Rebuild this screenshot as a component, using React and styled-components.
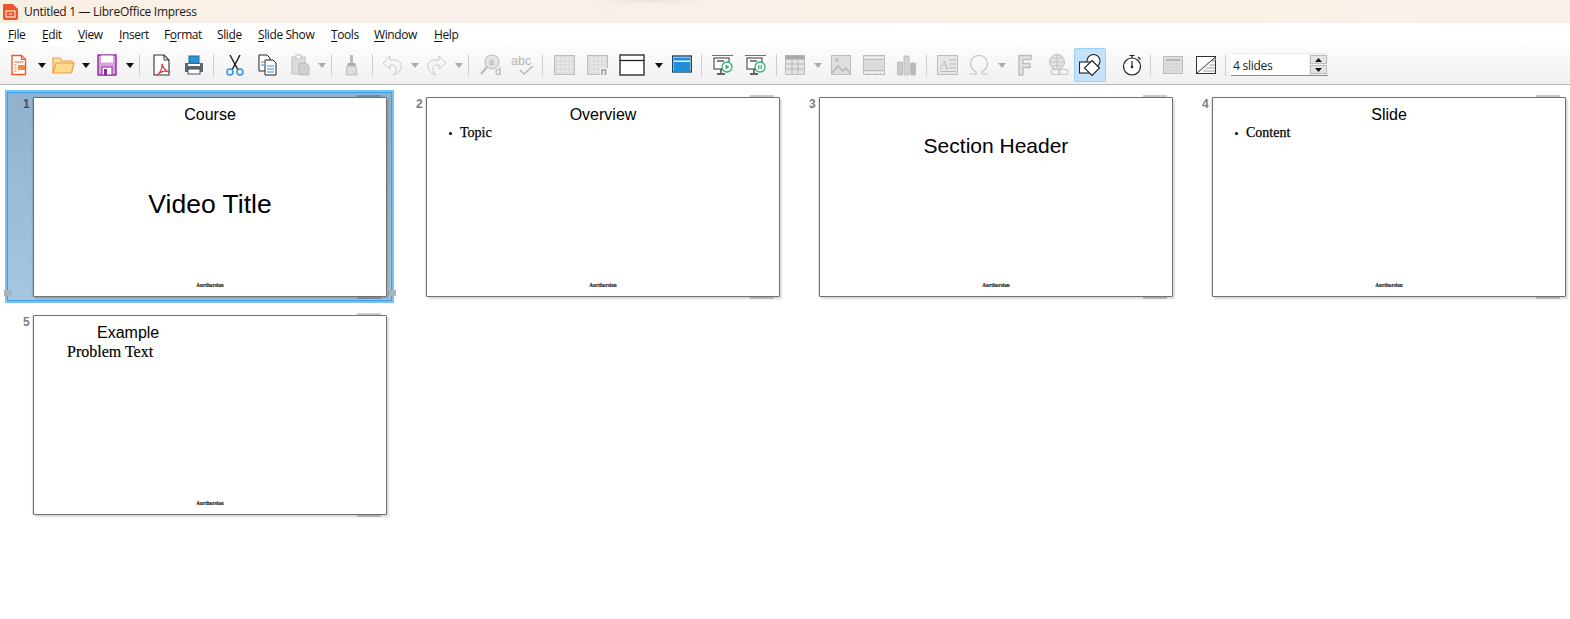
import React from "react";
import styled, { createGlobalStyle } from "styled-components";

const GRAY = "#bdbdbd";
const GRAY_FILL = "#dcdcdc";
const BLUE = "#1c8ad0";
const GREEN = "#2fb36b";

const Global = createGlobalStyle`
  html, body {
    margin: 0;
    padding: 0;
    background: #fff;
    font-family: "Open Sans", "Noto Sans", sans-serif;
  }
`;

const Window = styled.div`
  width: 1570px;
  height: 619px;
  overflow: hidden;
  background: #fff;
`;

const TitleBar = styled.div`
  height: 23px;
  display: flex;
  align-items: center;
  padding-left: 3px;
  gap: 6px;
  background:
    radial-gradient(ellipse 60px 5px at 650px 0, #ebe3da, transparent),
    linear-gradient(90deg, #f8efe3 0%, #f9f0ea 25%, #f9efeb 35%, #f8f1e6 60%, #f8f2e6 80%, #f9f0ec 92%);
`;

const TitleText = styled.span`
  font-size: 12px;
  letter-spacing: -0.3px;
  color: #1a1a1a;
`;

const MenuBar = styled.div`
  height: 23px;
  display: flex;
  align-items: center;
  background: #fff;
`;

const MenuItem = styled.span`
  font-size: 12px;
  letter-spacing: -0.4px;
  color: #111;
  margin-left: ${(p) => p.$ml}px;
  width: ${(p) => p.$w}px;
  white-space: nowrap;
  u {
    text-underline-offset: 2px;
  }
`;

const Toolbar = styled.div`
  height: 38px;
  display: flex;
  align-items: center;
  background: linear-gradient(180deg, #fcfcfc 0%, #f0f0f0 100%);
  border-bottom: 1px solid #b9b9b9;
`;

const Tool = styled.div`
  flex: none;
  width: ${(p) => p.$w}px;
  margin-left: ${(p) => p.$ml}px;
  display: flex;
  align-items: center;
  justify-content: center;
`;

const ActiveTool = styled(Tool)`
  height: 34px;
  box-sizing: border-box;
  background: #c4e3fb;
  border: 1px solid #9fd0f5;
  border-radius: 2px;
`;

const Separator = styled.div`
  flex: none;
  width: 1px;
  height: 22px;
  margin-left: ${(p) => p.$ml}px;
  background: #cfcfcf;
`;

const Spin = styled.div`
  flex: none;
  width: 97px;
  height: 21px;
  margin-left: 5px;
  display: flex;
  background: #fff;
  border-bottom: 1px solid #8c8c8c;
  box-shadow: 0 -1px 0 #ececec;
`;

const SpinValue = styled.span`
  flex: 1;
  font-size: 12px;
  letter-spacing: -0.25px;
  line-height: 23px;
  padding-left: 2px;
  color: #222;
`;

const SpinButtons = styled.div`
  width: 17px;
  display: flex;
  flex-direction: column;
  gap: 1px;
  background: #f0f0f0;
  padding: 1px;
`;

const SpinButton = styled.div`
  flex: 1;
  display: flex;
  align-items: center;
  justify-content: center;
  background: #e3e3e3;
  border: 1px solid #bcbcbc;
`;

const Sorter = styled.div`
  display: grid;
  grid-template-columns: repeat(4, 393px);
  grid-auto-rows: 218px;
  padding: 7px 0 0 7px;
`;

const Cell = styled.div`
  position: relative;
  width: 385px;
  height: 209px;
  box-sizing: border-box;
  padding: 4px 0 0 25px;
  border: ${(p) => (p.$selected ? "1px solid #3f9fe6" : "1px solid transparent")};
  outline: ${(p) => (p.$selected ? "2px solid #7cc0f2" : "none")};
  background: ${(p) =>
    p.$selected ? "linear-gradient(180deg, #8fb2cf 0%, #a6c6e0 100%)" : "transparent"};
`;

const Handle = styled.span`
  position: absolute;
  top: 197px;
  ${(p) => (p.$right ? "right: -5px;" : "left: -4px;")}
  width: 8px;
  height: 6px;
  background: #a9b4bd;
`;

const SlideNumber = styled.span`
  position: absolute;
  left: 15px;
  top: 4px;
  font-family: "Liberation Sans", Arial, sans-serif;
  font-size: 12px;
  font-weight: 700;
  color: ${(p) => (p.$selected ? "#444b55" : "#7d7d7d")};
`;

const Slide = styled.div`
  position: relative;
  width: 354px;
  height: 200px;
  box-sizing: border-box;
  background: #fff;
  border: 1px solid #707070;
  border-radius: 1px;
  box-shadow: 2px 2px 2px rgba(0, 0, 0, 0.14), -1px 0 1px rgba(0, 0, 0, 0.12);
  display: flex;
  flex-direction: column;
  align-items: ${(p) => (p.$left ? "flex-start" : "center")};
  color: #000;
  &::before,
  &::after {
    content: "";
    position: absolute;
    right: 5px;
    width: 24px;
    height: 2px;
    background: rgba(0, 0, 0, 0.2);
  }
  &::before {
    top: -3px;
  }
  &::after {
    bottom: -3px;
  }
`;

const SlideTitle = styled.div`
  font-family: "Liberation Sans", Arial, sans-serif;
  font-size: ${(p) => p.$size || 16}px;
  line-height: 18px;
  margin-top: ${(p) => p.$top || 8}px;
  margin-left: ${(p) => p.$left || 0}px;
  white-space: nowrap;
`;

const Bullet = styled.div`
  align-self: flex-start;
  font-family: "Liberation Serif", "Times New Roman", serif;
  font-size: 14px;
  line-height: 16px;
  margin: 1px 0 0 22px;
  display: flex;
  gap: 8px;
  align-items: center;
  -webkit-text-stroke: 0.25px #000;
  &::before {
    content: "";
    width: 3px;
    height: 3px;
    border-radius: 50%;
    background: #000;
  }
`;

const ProblemText = styled.div`
  font-family: "Liberation Serif", "Times New Roman", serif;
  font-size: 16px;
  line-height: 18px;
  margin: 1px 0 0 33px;
  -webkit-text-stroke: 0.2px #000;
`;

const Footer = styled.div`
  margin-top: auto;
  margin-bottom: 7px;
  align-self: center;
  font-family: "Liberation Serif", "Times New Roman", serif;
  font-size: 5.2px;
  font-weight: 700;
  line-height: 7px;
  color: #222;
  -webkit-text-stroke: 0.15px #222;
`;

const Svg = ({ w, h = 22, children }) => (
  <svg width={w} height={h} viewBox={`0 0 ${w} ${h}`} fill="none">
    {children}
  </svg>
);

const Arrow = ({ color = "#111" }) => (
  <svg width="8" height="5" viewBox="0 0 8 5">
    <path d="M0 0h8L4 5z" fill={color} />
  </svg>
);

const NewDoc = () => (
  <Svg w={20}>
    <path d="M3 1.500h9.500l4 4v15H3z" fill="#fff" stroke="#f05a28" strokeWidth="1.4" />
    <path d="M12.500 1.500v4h4" stroke="#f05a28" strokeWidth="1.2" />
    <path d="M5.500 8h9M5.500 11h2M5.500 14h2M5.500 17h2" stroke="#f05a28" strokeWidth="1.2" />
    <rect x="9" y="11" width="7" height="5" fill="#f58b3c" />
  </Svg>
);

const OpenFolder = () => (
  <Svg w={23}>
    <path d="M1 19V4h7l2 3h10v3" fill="#fbe3a6" stroke="#ef9a3c" strokeWidth="1.2" />
    <path d="M1 19l3-10h18l-2.500 10z" fill="#fcdc8c" stroke="#ef9a3c" strokeWidth="1.2" />
  </Svg>
);

const Save = () => (
  <Svg w={20}>
    <rect x="1" y="1" width="18" height="20" fill="#d8a2dd" stroke="#8e2a9e" strokeWidth="1.4" />
    <rect x="4" y="1.500" width="12" height="7" fill="#fff" />
    <rect x="5" y="13" width="10" height="8" fill="#fff" stroke="#8e2a9e" />
    <rect x="7" y="15" width="3" height="6" fill="#8e2a9e" />
  </Svg>
);

const Pdf = () => (
  <Svg w={19}>
    <path d="M2 1h10l5 5v15H2z" fill="#fff" stroke="#333" strokeWidth="1.1" />
    <path d="M12 1v5h5" stroke="#333" />
    <path d="M10 10c1 5-3 10-5 11 3-3 8-5 13-3-4 0-7-4-8-8z" stroke="#e23b3b" strokeWidth="1.3" />
  </Svg>
);

const Print = () => (
  <Svg w={20}>
    <rect x="5" y="2" width="10" height="7" fill="#2a93d5" stroke="#1c6fa5" />
    <path d="M1 9h18v9H1z" fill="#5a6570" />
    <rect x="4" y="15" width="12" height="5" fill="#fff" stroke="#46505a" />
    <rect x="4" y="10" width="12" height="2" fill="#fff" />
  </Svg>
);

const Cut = () => (
  <Svg w={18}>
    <path d="M4 1l8 15M14 1L6 16" stroke="#222" strokeWidth="1.5" />
    <circle cx="4" cy="18" r="3" stroke="#2a8fd8" strokeWidth="1.4" />
    <circle cx="14" cy="18" r="3" stroke="#2a8fd8" strokeWidth="1.4" />
  </Svg>
);

const Copy = () => (
  <Svg w={19}>
    <path d="M1 1h8l3 3v13H1z" fill="#fff" stroke="#222" />
    <path d="M7 6h8l3 3v12H7z" fill="#fff" stroke="#222" />
    <path d="M3 8h3M3 11h3M9 12h7M9 15h7M9 18h7" stroke="#2a8fd8" />
  </Svg>
);

const Paste = () => (
  <Svg w={19}>
    <rect x="1" y="3" width="13" height="17" fill={GRAY_FILL} stroke={GRAY} />
    <rect x="5" y="1" width="5" height="4" fill="#fff" stroke={GRAY} />
    <path d="M8 9h7l3 3v9H8z" fill="#d0d0d0" stroke="#bbb" />
  </Svg>
);

const Brush = () => (
  <Svg w={13}>
    <rect x="5" y="1" width="3" height="8" fill={GRAY} />
    <path d="M3 9h7l1 3H2z" fill="#aaa" />
    <path d="M2 12h9l1 9H1z" fill={GRAY_FILL} stroke={GRAY} />
  </Svg>
);

const UNDO_PATH =
  "M1 9L8 2v4h4c6 0 8 5 7 8-1 4-5 6-8 7 3-3 4-6 3-8-1-2-3-2-6-2v4z";

const Undo = () => (
  <Svg w={20}>
    <path d={UNDO_PATH} stroke="#c9c9c9" strokeLinejoin="round" />
  </Svg>
);

const Redo = () => (
  <Svg w={20}>
    <path d={UNDO_PATH} stroke="#c9c9c9" strokeLinejoin="round" transform="matrix(-1 0 0 1 20 0)" />
  </Svg>
);

const Find = () => (
  <Svg w={23}>
    <circle cx="12" cy="8" r="7" fill="#e3e3e3" stroke={GRAY} />
    <path d="M7 13l-6 7" stroke={GRAY} strokeWidth="2.400" />
    <text x="9" y="11" fontFamily="Liberation Sans" fontSize="9" fill="#aaa">a</text>
    <text x="15" y="21" fontFamily="Liberation Sans" fontSize="11" fill="#aaa">d</text>
  </Svg>
);

const Spell = () => (
  <Svg w={23}>
    <text x="0" y="11" fontFamily="Liberation Sans" fontSize="12.5" fill="#b5b5b5">abc</text>
    <path d="M9 16l4 4 9-8" stroke="#b5b5b5" strokeWidth="1.3" />
  </Svg>
);

const DotGrid = ({ n }) => {
  const dots = [];
  for (let y = 4; y < 20; y += 4) {
    for (let x = 4; x < 20; x += 4) {
      dots.push(<rect key={`${x}-${y}`} x={x} y={y} width="2" height="2" fill="#ececec" />);
    }
  }
  return (
    <Svg w={21}>
      <rect x="0.500" y="1.500" width="20" height="19" fill="#dedede" stroke={GRAY} />
      {dots}
      {n && <rect x="13" y="14" width="8" height="8" fill="#f0f0f0" />}
      {n && <path d="M15 21v-5h3.500v5" stroke="#999" strokeWidth="1.4" />}
    </Svg>
  );
};

const Master = () => (
  <Svg w={26}>
    <rect x="1" y="1" width="24" height="20" fill="#fff" stroke="#222" strokeWidth="1.3" />
    <path d="M1 6.500h24" stroke="#222" strokeWidth="1.3" />
  </Svg>
);

const BlueLayout = () => (
  <Svg w={20}>
    <rect x="0.700" y="2" width="18.600" height="16" fill="#e8f4fb" stroke="#123a5e" strokeWidth="1.3" />
    <rect x="2" y="3.500" width="16" height="3" fill="#1f8ed6" />
    <rect x="2" y="8" width="16" height="9" fill="#1f8ed6" />
  </Svg>
);

const Show = ({ pause }) => (
  <Svg w={21}>
    <path d="M0 1.500h21" stroke={BLUE} />
    <rect x="2" y="4" width="15" height="11" fill="#fff" stroke="#333" />
    <path d="M5 7h7" stroke="#777" strokeWidth="1.8" />
    <path d="M9 15v4M5 20h8" stroke="#333" strokeWidth="1.3" />
    <circle cx="15" cy="13" r="5" fill="#fff" stroke={GREEN} strokeWidth="1.3" />
    {pause ? (
      <path d="M13.800 11v4M16.200 11v4" stroke={GREEN} strokeWidth="1.3" />
    ) : (
      <path d="M13.500 10.500v5l4-2.500z" fill={GREEN} />
    )}
  </Svg>
);

const Table = () => (
  <Svg w={20}>
    <rect x="0.500" y="1.500" width="19" height="19" fill="#e4e4e4" stroke={GRAY} />
    <rect x="0.500" y="1.500" width="19" height="4" fill="#a8a8a8" />
    <path d="M7 5v15M13 5v15M1 10h18M1 15h18" stroke="#b5b5b5" />
  </Svg>
);

const Picture = () => (
  <Svg w={20}>
    <rect x="0.500" y="1.500" width="19" height="19" fill="#dedede" stroke={GRAY} />
    <circle cx="6" cy="6" r="2" fill="#c4c4c4" />
    <path d="M1 19l6-7 5 5 3-3 4 5" stroke="#b5b5b5" strokeWidth="1.3" />
  </Svg>
);

const Film = () => (
  <Svg w={22}>
    <rect x="0.500" y="1.500" width="21" height="19" fill="#dcdcdc" stroke={GRAY} />
    <path d="M1 3.500h20M1 18.500h20" stroke="#fff" strokeWidth="1.6" strokeDasharray="2 1.500" />
    <path d="M1 5.500h20M1 16.500h20" stroke={GRAY} />
  </Svg>
);

const Chart = () => (
  <Svg w={19}>
    <rect x="0.500" y="8" width="5" height="13" rx="1" fill="#c9c9c9" stroke={GRAY} />
    <rect x="7" y="2" width="5" height="19" rx="1" fill="#d4d4d4" stroke={GRAY} />
    <rect x="13.500" y="9" width="5" height="12" rx="1" fill="#b8b8b8" stroke={GRAY} />
  </Svg>
);

const TextBox = () => (
  <Svg w={21}>
    <rect x="0.500" y="1.500" width="20" height="19" fill="#e6e6e6" stroke={GRAY} />
    <text x="2.500" y="15" fontFamily="Liberation Serif" fontSize="13" fill="#bbb">A</text>
    <path d="M12 6h7M12 10h7M12 14h7M3 17.500h16" stroke="#bbb" />
  </Svg>
);

const Omega = () => (
  <Svg w={20}>
    <path
      d="M1 20h6v-2.500C3.500 16 1.500 13 1.500 9.500 1.500 5 5 1.500 10 1.500s8.500 3.500 8.500 8c0 3.500-2 6.500-5.500 8V20h6"
      stroke="#c2c2c2"
      strokeWidth="1.2"
    />
  </Svg>
);

const FontWork = () => (
  <Svg w={14}>
    <path d="M1 1.500h12v4H5v4h7v4H5v7.500H1z" fill="#e2e2e2" stroke={GRAY} strokeWidth="1.4" />
  </Svg>
);

const HyperLink = () => (
  <Svg w={21}>
    <circle cx="9" cy="8" r="7.500" fill="#e2e2e2" stroke={GRAY} />
    <path d="M2 8h14M9 1v14M4 3.500c3 1.500 7 1.500 10 0M4 12.500c3-1.500 7-1.500 10 0" stroke={GRAY} strokeWidth="0.8" />
    <rect x="3" y="15.500" width="9" height="5" rx="2.500" fill="#f2f2f2" stroke="#c6c6c6" strokeWidth="1.2" />
    <rect x="11" y="15.500" width="9" height="5" rx="2.500" fill="none" stroke="#c6c6c6" strokeWidth="1.2" />
  </Svg>
);

const Shapes = () => (
  <Svg w={22}>
    <circle cx="14.500" cy="7" r="6.500" fill="#fff" stroke="#222" strokeWidth="1.1" />
    <rect x="0.500" y="8" width="14" height="11" fill="#fff" stroke="#222" strokeWidth="1.1" />
    <path d="M13 6.500l7.500 7.500-7.500 7.500L5.500 14z" fill="#fff" stroke="#222" strokeWidth="1.1" />
  </Svg>
);

const Timer = () => (
  <Svg w={20}>
    <circle cx="10" cy="12.500" r="8.500" fill="#fff" stroke="#222" strokeWidth="1.2" />
    <path d="M7.500 1.500h5M10 1.500v2.500M16 3l2.500 2.500" stroke="#222" strokeWidth="1.2" />
    <path d="M10 7v5.500" stroke="#222" strokeWidth="1.2" />
    <circle cx="10" cy="13" r="1.300" fill="#222" />
  </Svg>
);

const HeaderFooter = () => (
  <Svg w={20}>
    <rect x="0.500" y="2.500" width="19" height="17" fill="#dedede" stroke={GRAY} />
    <path d="M3 6h14" stroke="#aaa" strokeWidth="1.6" />
    <path d="M3 10h14M3 13h14M3 16h14" stroke="#cfcfcf" />
  </Svg>
);

const Transition = () => (
  <Svg w={20}>
    <rect x="0.500" y="2.500" width="19" height="17" fill="#fff" stroke="#333" />
    <path d="M0.500 19.500L19.500 3" stroke="#333" />
    <path d="M19 4v3h-3zM10 14h9M13 11h6M7 17h12" stroke="#999" />
  </Svg>
);

const tools = [
  { c: <NewDoc />, w: 20, ml: 9 },
  { c: <Arrow />, w: 8, ml: 9 },
  { c: <OpenFolder />, w: 23, ml: 6 },
  { c: <Arrow />, w: 8, ml: 7 },
  { c: <Save />, w: 20, ml: 7 },
  { c: <Arrow />, w: 8, ml: 9 },
  { sep: 5 },
  { c: <Pdf />, w: 19, ml: 12 },
  { c: <Print />, w: 20, ml: 13 },
  { sep: 9 },
  { c: <Cut />, w: 18, ml: 12 },
  { c: <Copy />, w: 19, ml: 14 },
  { c: <Paste />, w: 19, ml: 14 },
  { c: <Arrow color="#aaa" />, w: 8, ml: 8 },
  { sep: 5 },
  { c: <Brush />, w: 13, ml: 13 },
  { sep: 14 },
  { c: <Undo />, w: 20, ml: 9 },
  { c: <Arrow color="#aaa" />, w: 8, ml: 9 },
  { c: <Redo />, w: 20, ml: 8 },
  { c: <Arrow color="#aaa" />, w: 8, ml: 8 },
  { sep: 5 },
  { c: <Find />, w: 23, ml: 11 },
  { c: <Spell />, w: 23, ml: 8 },
  { sep: 8 },
  { c: <DotGrid />, w: 21, ml: 11 },
  { c: <DotGrid n />, w: 21, ml: 12 },
  { c: <Master />, w: 26, ml: 11 },
  { c: <Arrow />, w: 8, ml: 10 },
  { c: <BlueLayout />, w: 20, ml: 9 },
  { sep: 9 },
  { c: <Show />, w: 21, ml: 10 },
  { c: <Show pause />, w: 21, ml: 12 },
  { sep: 10 },
  { c: <Table />, w: 20, ml: 8 },
  { c: <Arrow color="#aaa" />, w: 8, ml: 9 },
  { c: <Picture />, w: 20, ml: 9 },
  { c: <Film />, w: 22, ml: 12 },
  { c: <Chart />, w: 19, ml: 12 },
  { sep: 10 },
  { c: <TextBox />, w: 21, ml: 10 },
  { c: <Omega />, w: 20, ml: 11 },
  { c: <Arrow color="#aaa" />, w: 8, ml: 9 },
  { c: <FontWork />, w: 14, ml: 12 },
  { c: <HyperLink />, w: 21, ml: 16 },
  { c: <Shapes />, w: 32, ml: 5, active: true },
  { c: <Timer />, w: 20, ml: 16 },
  { sep: 8 },
  { c: <HeaderFooter />, w: 20, ml: 12 },
  { c: <Transition />, w: 20, ml: 13 },
  { sep: 9 },
];

const menus = [
  { ml: 8, w: 26, label: <><u>F</u>ile</> },
  { ml: 8, w: 28, label: <><u>E</u>dit</> },
  { ml: 8, w: 33, label: <><u>V</u>iew</> },
  { ml: 8, w: 37, label: <><u>I</u>nsert</> },
  { ml: 8, w: 45, label: <>F<u>o</u>rmat</> },
  { ml: 8, w: 33, label: <>Sli<u>d</u>e</> },
  { ml: 8, w: 65, label: <><u>S</u>lide Show</> },
  { ml: 8, w: 35, label: <><u>T</u>ools</> },
  { ml: 8, w: 52, label: <><u>W</u>indow</> },
  { ml: 8, w: 30, label: <><u>H</u>elp</> },
];

const Footnote = () => <Footer>Aurthorsion</Footer>;

export default function App() {
  return (
    <Window>
      <Global />
      <TitleBar>
        <svg width="15" height="16" viewBox="0 0 15 16">
          <path d="M1 0h9l5 5v9a2 2 0 0 1-2 2H2a2 2 0 0 1-2-2V1a1 1 0 0 1 1-1z" fill="#e8562a" />
          <rect x="3" y="7" width="9" height="6" fill="none" stroke="#fff" />
          <path d="M6 10h3" stroke="#fff" />
        </svg>
        <TitleText>Untitled 1 — LibreOffice Impress</TitleText>
      </TitleBar>
      <MenuBar>
        {menus.map((m, i) => (
          <MenuItem key={i} $ml={m.ml} $w={m.w}>
            {m.label}
          </MenuItem>
        ))}
      </MenuBar>
      <Toolbar>
        {tools.map((t, i) => {
          if (t.sep) return <Separator key={i} $ml={t.sep} />;
          const Item = t.active ? ActiveTool : Tool;
          return (
            <Item key={i} $w={t.w} $ml={t.ml}>
              {t.c}
            </Item>
          );
        })}
        <Spin>
          <SpinValue>4 slides</SpinValue>
          <SpinButtons>
            <SpinButton>
              <svg width="7" height="4" viewBox="0 0 7 4"><path d="M0 4h7L3.500 0z" fill="#111" /></svg>
            </SpinButton>
            <SpinButton>
              <svg width="7" height="4" viewBox="0 0 7 4"><path d="M0 0h7L3.500 4z" fill="#111" /></svg>
            </SpinButton>
          </SpinButtons>
        </Spin>
      </Toolbar>
      <Sorter>
        <Cell $selected>
          <SlideNumber $selected>1</SlideNumber>
          <Handle />
          <Handle $right />
          <Slide>
            <SlideTitle>Course</SlideTitle>
            <SlideTitle $size={26.5} $top={71}>Video Title</SlideTitle>
            <Footnote />
          </Slide>
        </Cell>
        <Cell>
          <SlideNumber>2</SlideNumber>
          <Slide>
            <SlideTitle>Overview</SlideTitle>
            <Bullet>Topic</Bullet>
            <Footnote />
          </Slide>
        </Cell>
        <Cell>
          <SlideNumber>3</SlideNumber>
          <Slide>
            <SlideTitle $size={21} $top={39}>Section Header</SlideTitle>
            <Footnote />
          </Slide>
        </Cell>
        <Cell>
          <SlideNumber>4</SlideNumber>
          <Slide>
            <SlideTitle>Slide</SlideTitle>
            <Bullet>Content</Bullet>
            <Footnote />
          </Slide>
        </Cell>
        <Cell>
          <SlideNumber>5</SlideNumber>
          <Slide $left>
            <SlideTitle $left={63}>Example</SlideTitle>
            <ProblemText>Problem Text</ProblemText>
            <Footnote />
          </Slide>
        </Cell>
      </Sorter>
    </Window>
  );
}
